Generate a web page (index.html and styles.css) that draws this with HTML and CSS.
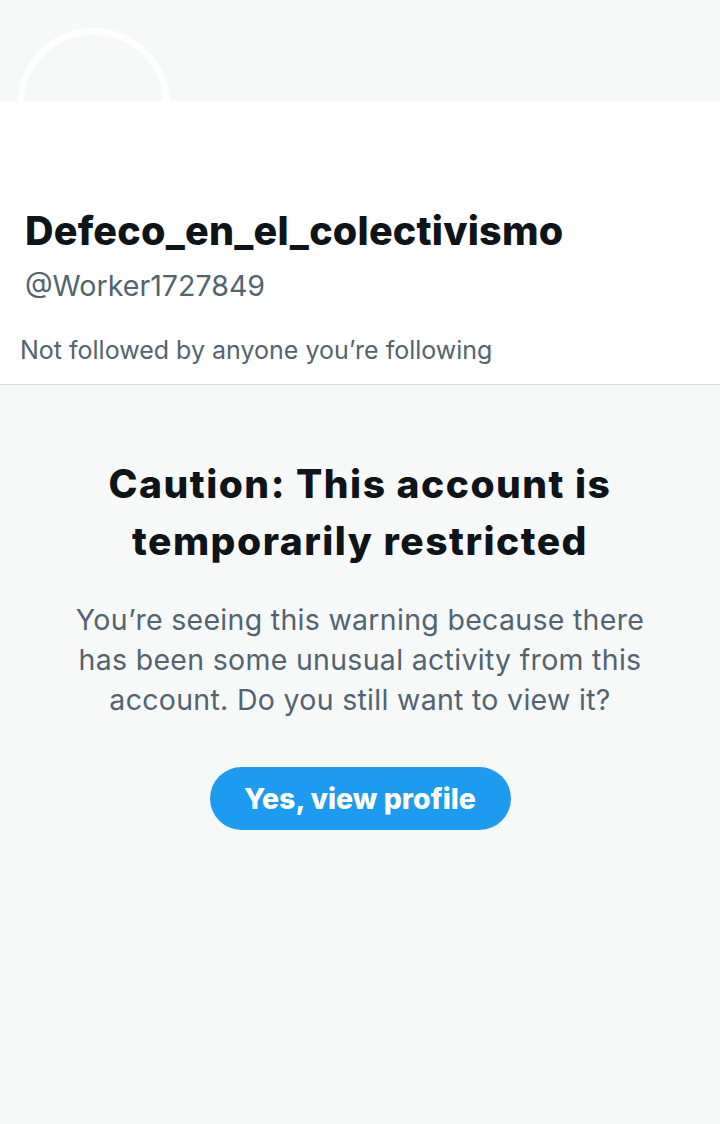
FILE: index.html
```html
<!DOCTYPE html>
<html lang="en">
<head>
<meta charset="utf-8">
<link rel="stylesheet" href="styles.css">
</head>
<body>
<div class="page">
  <div class="banner"></div>
  <div class="avatar"></div>
  <section class="profile">
    <h1 class="name">Defeco_en_el_colectivismo</h1>
    <div class="handle">@Worker1727849</div>
    <div class="followed">Not followed by anyone you’re following</div>
  </section>
  <section class="warning">
    <h2 class="title">Caution: This account is temporarily restricted</h2>
    <p class="text">You’re seeing this warning because there has been some unusual activity from this account. Do you still want to view it?</p>
    <button class="btn">Yes, view profile</button>
  </section>
</div>
</body>
</html>
```
FILE: styles.css
```css
html, body {
  margin: 0;
  padding: 0;
}
body {
  width: 720px;
  height: 1124px;
  background: #f7f9f9;
  font-family: Inter, Roboto, "Noto Sans", sans-serif;
  overflow: hidden;
}
.page {
  position: relative;
  width: 720px;
  height: 1124px;
  background: #f7f9f9;
}
.banner {
  height: 101px;
  background: #f7f9f9;
}
.avatar {
  position: absolute;
  left: 17px;
  top: 28px;
  width: 139px;
  height: 139px;
  border: 7px solid #ffffff;
  border-radius: 50%;
  z-index: 0;
}
.profile {
  position: relative;
  z-index: 1;
  background: #ffffff;
  height: 284px;
  border-bottom: 1px solid #cfd9de;
  box-sizing: border-box;
  padding: 106px 0 0 25px;
}
.name {
  margin: 0;
  font-size: 39.5px;
  font-weight: 800;
  color: #0f1419;
  line-height: 48px;
  letter-spacing: 0.2px;
}
.handle {
  font-size: 28.6px;
  color: #536471;
  line-height: 36px;
  margin-top: 13px;
}
.followed {
  font-size: 25px;
  color: #536471;
  line-height: 34px;
  margin-top: 29px;
  margin-left: -5px;
}
.warning {
  display: flex;
  flex-direction: column;
  align-items: center;
  padding: 70px 0 0;
  text-align: center;
}
.title {
  margin: 0;
  font-size: 39px;
  font-weight: 800;
  color: #0f1419;
  line-height: 57px;
  letter-spacing: 1.5px;
  width: 620px;
}
.text {
  margin: 31px 0 0;
  font-size: 28.5px;
  color: #536471;
  line-height: 40px;
  letter-spacing: 0.3px;
  width: 600px;
}
.btn {
  margin-top: 47px;
  height: 63px;
  width: 301px;
  border: none;
  border-radius: 32px;
  background: #1d9bf0;
  color: #ffffff;
  font-family: Inter, Roboto, "Noto Sans", sans-serif;
  font-size: 28.5px;
  font-weight: 800;
  padding: 0;
}
```
